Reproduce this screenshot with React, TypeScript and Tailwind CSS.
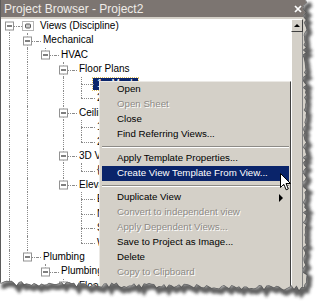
import React from "react";

type Row = {
	level: number;
	label: string;
	next: boolean;
	box?: boolean;
	icon?: boolean;
	selected?: boolean;
};

type MenuItem = {
	label?: string;
	disabled?: boolean;
	active?: boolean;
	sub?: boolean;
	sep?: boolean;
};

const ROWS: Row[] = [
	{ level: 0, label: "Views (Discipline)", next: true, box: true, icon: true },
	{ level: 1, label: "Mechanical", next: true, box: true },
	{ level: 2, label: "HVAC", next: false, box: true },
	{ level: 3, label: "Floor Plans", next: true, box: true },
	{ level: 4, label: "1 - Mech", next: true, selected: true },
	{ level: 4, label: "2 - Mech", next: false },
	{ level: 3, label: "Ceiling Plans", next: true, box: true },
	{ level: 4, label: "1 - Ceiling Mech", next: true },
	{ level: 4, label: "2 - Ceiling Mech", next: false },
	{ level: 3, label: "3D Views", next: true, box: true },
	{ level: 4, label: "{3D}", next: false },
	{ level: 3, label: "Elevations (Building Elevation)", next: false, box: true },
	{ level: 4, label: "East - Mech", next: true },
	{ level: 4, label: "North - Mech", next: true },
	{ level: 4, label: "South - Mech", next: true },
	{ level: 4, label: "West - Mech", next: false },
	{ level: 1, label: "Plumbing", next: false, box: true },
	{ level: 2, label: "Plumbing", next: false, box: true },
	{ level: 3, label: "Floor Plans", next: true, box: true },
];

const MENU: MenuItem[] = [
	{ label: "Open" },
	{ label: "Open Sheet", disabled: true },
	{ label: "Close" },
	{ label: "Find Referring Views..." },
	{ sep: true },
	{ label: "Apply Template Properties..." },
	{ label: "Create View Template From View...", active: true },
	{ sep: true },
	{ label: "Duplicate View", sub: true },
	{ label: "Convert to independent view", disabled: true },
	{ label: "Apply Dependent Views...", disabled: true },
	{ label: "Save to Project as Image..." },
	{ label: "Delete" },
	{ label: "Copy to Clipboard", disabled: true },
];

// guide lines for each row: does the ancestor at that level still have siblings below
const withGuides = (() => {
	const open: boolean[] = [];
	return ROWS.map((row) => {
		const guides = open.slice(0, row.level).map((g) => !!g);
		open[row.level] = row.next;
		return { row, guides };
	});
})();

const ViewsIcon: React.FC = () => (
	<svg width="12" height="12" viewBox="0 0 12 12" className="shrink-0">
		<rect x="0.5" y="1.5" width="11" height="9" fill="none" stroke="#6a6a6a" strokeDasharray="1 1" />
		<rect x="3.5" y="4" width="5" height="4" rx="1" fill="#c9c9c9" stroke="#5a5a5a" />
	</svg>
);

const TreeRow: React.FC<{ row: Row; guides: boolean[]; first: boolean }> = ({ row, guides, first }) => {
	return (
		<div className="flex h-[14.45px] items-stretch">
			{guides.map((g, i) => (
				<div key={i} className="relative w-[18px] shrink-0">
					{g && <span className="absolute left-[8px] top-0 bottom-0 border-l border-dotted border-[#8a8a8a]" />}
				</div>
			))}
			<div className="relative w-[18px] shrink-0">
				{!first && <span className="absolute left-[8px] top-0 h-1/2 border-l border-dotted border-[#8a8a8a]" />}
				{row.next && <span className="absolute left-[8px] top-1/2 bottom-0 border-l border-dotted border-[#8a8a8a]" />}
				<span className="absolute left-[8px] right-0 top-1/2 border-t border-dotted border-[#8a8a8a]" />
				{row.box && (
					<span className="absolute left-[4px] top-1/2 -translate-y-1/2 w-[9px] h-[9px] border border-[#929292] bg-white flex items-center justify-center">
						<span className="w-[5px] h-px bg-black" />
					</span>
				)}
			</div>
			<div className={`relative shrink-0 ${row.icon ? "w-[3px]" : row.selected ? "w-[2px]" : "w-[4px]"}`}>
				<span className="absolute left-0 right-0 top-1/2 border-t border-dotted border-[#8a8a8a]" />
			</div>
			{row.icon && (
				<div className="flex items-center mr-[4px]">
					<ViewsIcon />
				</div>
			)}
			{row.selected ? (
				<div className="flex items-center">
					<span className="h-[12px] leading-[12px] pl-[4px] pr-[2px] bg-[#0a246a] text-white outline-1 outline-dotted outline-[#e0c060]">
						{row.label}
					</span>
				</div>
			) : (
				<span className="ml-[2px] whitespace-nowrap leading-[14.45px] text-black">{row.label}</span>
			)}
		</div>
	);
};

const ContextMenu: React.FC = () => (
	<div className="absolute left-[99px] top-[81px] w-[192px] h-[215px] bg-[#d4d0c8] border border-t-[#ebe9e5] border-l-[#ebe9e5] border-r-[#404040] border-b-[#404040] pl-[2px] pr-[1px] text-[9.7px]">
		{MENU.map((item, i) =>
			item.sep ? (
				<div key={i} className="h-[9px] flex flex-col justify-center">
					<div className="h-[2px] border-t border-[#8c8a86] border-b border-b-white" />
				</div>
			) : (
				<div
					key={i}
					className={`h-[15px] flex items-center pl-[15px] whitespace-nowrap ${
						item.active ? "bg-[#0a246a] text-white" : item.disabled ? "text-[#8d8a85] [text-shadow:1px_1px_0_#ffffff]" : "text-black"
					}`}
				>
					{item.label}
					{item.sub && (
						<span className="ml-auto mr-[6px] w-0 h-0 border-y-[4px] border-y-transparent border-l-[4px] border-l-black" />
					)}
				</div>
			)
		)}
	</div>
);

// torn paper edge along the right and bottom of the capture
const tornEdge = (() => {
	let s = 11;
	const rnd = () => {
		s = (s * 9301 + 49297) % 233280;
		return s / 233280;
	};
	const pts: [number, number][] = [];
	for (let y = 0; y <= 285; y += 2.5) pts.push([304.5 + (rnd() - 0.5) * 4.5, y]);
	for (let x = 304; x >= -2; x -= 2.5) pts.push([x, 283 + x * 0.016 + (rnd() - 0.5) * 5]);
	return pts;
})();

const edgeLine = tornEdge.map((p) => `${p[0].toFixed(1)},${p[1].toFixed(1)}`).join(" ");
const shadowLine = tornEdge.map((p) => `${(p[0] + 2.5).toFixed(1)},${(p[1] + 3).toFixed(1)}`).join(" ");
const outside = `M320,0 L${edgeLine.split(" ").join(" L")} L-2,302 L320,302 Z`;

const TornOverlay: React.FC = () => (
	<svg className="absolute inset-0 pointer-events-none" width="320" height="302" viewBox="0 0 320 302">
		<defs>
			<clipPath id="outside">
				<path d={outside} />
			</clipPath>
			<filter id="soft" x="-10%" y="-10%" width="120%" height="120%">
				<feGaussianBlur stdDeviation="1.6" />
			</filter>
		</defs>
		<path d={outside} fill="#ffffff" />
		<g clipPath="url(#outside)">
			<polyline points={shadowLine} fill="none" stroke="#2e2e2e" strokeWidth="6" opacity="0.75" filter="url(#soft)" />
			<polyline points={edgeLine} fill="none" stroke="#555" strokeWidth="1.5" opacity="0.8" />
		</g>
	</svg>
);

const Cursor: React.FC = () => (
	<svg className="absolute left-[280px] top-[173px] pointer-events-none" width="12" height="19" viewBox="0 0 12 19">
		<path d="M0.5,0.5 L0.5,14.5 L3.8,11.3 L6.2,16.8 L8.3,15.9 L6,10.5 L10.5,10.5 Z" fill="#fff" stroke="#000" strokeWidth="1" />
	</svg>
);

const App: React.FC = (): JSX.Element => {
	return (
		<div className="relative w-[320px] h-[302px] overflow-hidden bg-white font-['Liberation_Sans',Arial,sans-serif]">
			<div className="w-[306px] h-[296px] flex flex-col bg-[#d4d0c8] border-l border-[#5c5c5c]">
				<div className="h-[17px] shrink-0 bg-[#7c7571] flex items-center justify-between pl-[3px] pr-[4px]">
					<span className="text-[12px] text-[#efece8] whitespace-nowrap">Project Browser - Project2</span>
					<svg width="8" height="8" viewBox="0 0 8 8">
						<path d="M1,1 L7,7 M7,1 L1,7" stroke="#ffffff" strokeWidth="1.7" />
					</svg>
				</div>
				<div className="h-[2px] shrink-0 bg-[#d4d0c8]" />
				<div className="flex flex-1 min-h-0">
					<div className="w-[290px] shrink-0 bg-white overflow-hidden text-[10px]">
						{withGuides.map(({ row, guides }, i) => (
							<TreeRow key={i} row={row} guides={guides} first={i === 0} />
						))}
					</div>
					<div className="w-[12px] shrink-0 flex flex-col">
						<div className="h-[13px] shrink-0 bg-[#d4d0c8] border border-t-white border-l-white border-r-[#404040] border-b-[#404040] flex items-center justify-center">
							<span className="w-0 h-0 border-x-[3px] border-x-transparent border-b-[3px] border-b-black" />
						</div>
						<div className="flex-1 bg-[#d4d0c8] border-l border-white border-r border-r-[#808080]" />
					</div>
				</div>
			</div>
			<ContextMenu />
			<Cursor />
			<TornOverlay />
		</div>
	);
};

export default App;
